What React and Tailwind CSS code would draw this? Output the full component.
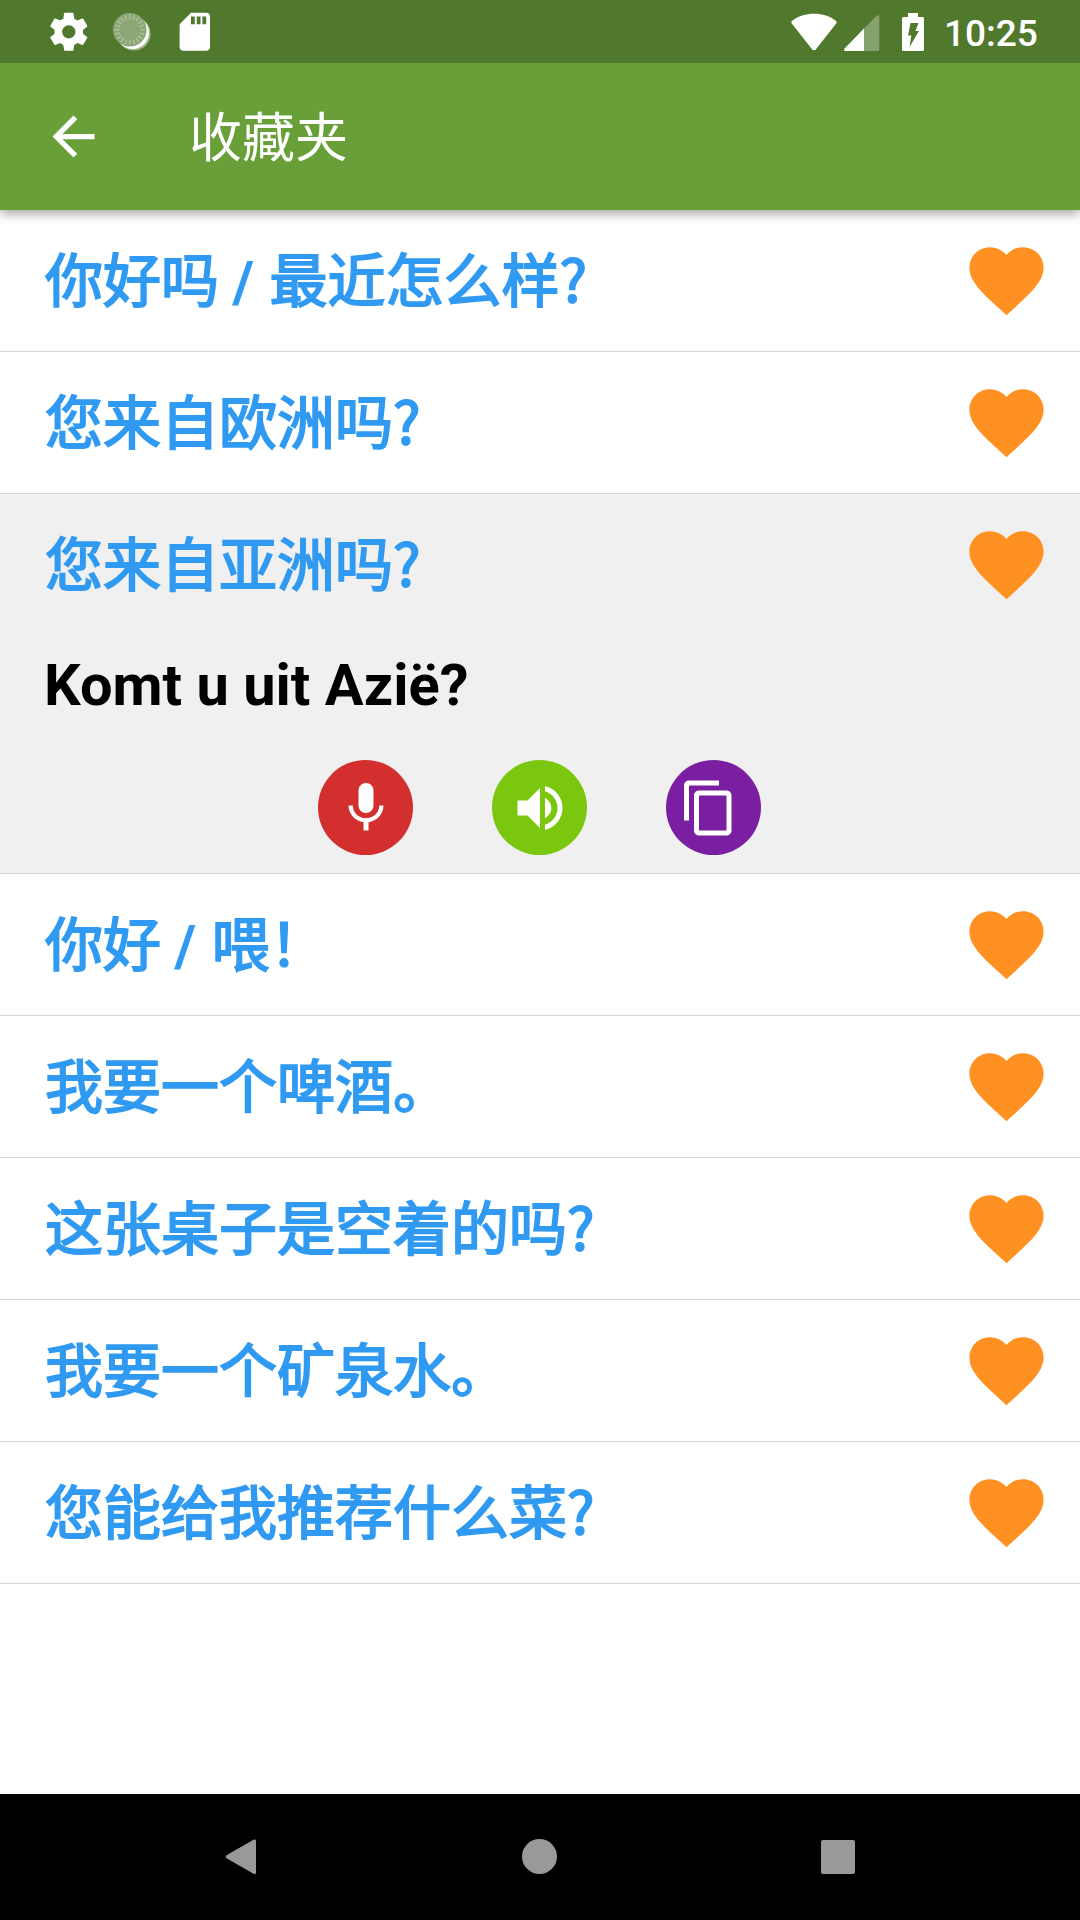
const CJK = "font-['Noto_Sans_CJK_SC',sans-serif]";

function Icon({ size, d, className = "" }) {
  return (
    <svg viewBox="0 0 24 24" style={{ width: size, height: size }} className={`shrink-0 ${className}`} fill="currentColor">
      <path d={d} />
    </svg>
  );
}

const GEAR =
  "M19.43 12.98c.04-.32.07-.64.07-.98s-.03-.66-.07-.98l2.11-1.65c.19-.15.24-.42.12-.64l-2-3.46c-.12-.22-.39-.3-.61-.22l-2.49 1c-.52-.4-1.08-.73-1.69-.98l-.38-2.65C14.46 2.18 14.25 2 14 2h-4c-.25 0-.46.18-.49.42l-.38 2.65c-.61.25-1.17.59-1.69.98l-2.49-1c-.23-.09-.49 0-.61.22l-2 3.46c-.13.22-.07.49.12.64l2.11 1.65c-.04.32-.07.65-.07.98s.03.66.07.98l-2.11 1.65c-.19.15-.24.42-.12.64l2 3.46c.12.22.39.3.61.22l2.49-1c.52.4 1.08.73 1.69.98l.38 2.65c.03.24.24.42.49.42h4c.25 0 .46-.18.49-.42l.38-2.65c.61-.25 1.17-.59 1.69-.98l2.49 1c.23.09.49 0 .61-.22l2-3.46c.12-.22.07-.49-.12-.64l-2.11-1.65zM12 15.5c-1.93 0-3.5-1.57-3.5-3.5s1.57-3.5 3.5-3.5 3.5 1.57 3.5 3.5-1.57 3.5-3.5 3.5z";
const SD =
  "M18 2h-8L4.02 8 4 20c0 1.1.9 2 2 2h12c1.1 0 2-.9 2-2V4c0-1.1-.9-2-2-2zm-6 6h-2V4h2v4zm3 0h-2V4h2v4zm3 0h-2V4h2v4z";
const BACK = "M20 11H7.83l5.59-5.59L12 4l-8 8 8 8 1.41-1.41L7.83 13H20v-2z";
const HEART =
  "M12 21.35l-1.45-1.32C5.4 15.36 2 12.28 2 8.5 2 5.42 4.42 3 7.5 3c1.74 0 3.41.81 4.5 2.09C13.09 3.81 14.76 3 16.5 3 19.58 3 22 5.42 22 8.5c0 3.78-3.4 6.86-8.55 11.54L12 21.35z";
const MIC =
  "M12 14c1.66 0 2.99-1.34 2.99-3L15 5c0-1.66-1.34-3-3-3S9 3.34 9 5v6c0 1.66 1.34 3 3 3zm5.3-3c0 3-2.54 5.1-5.3 5.1S6.7 14 6.7 11H5c0 3.41 2.72 6.23 6 6.72V21h2v-3.28c3.28-.48 6-3.3 6-6.72h-1.7z";
const VOLUME =
  "M3 9v6h4l5 5V4L7 9H3zm13.5 3c0-1.77-1.02-3.29-2.5-4.03v8.05c1.48-.73 2.5-2.25 2.5-4.02zM14 3.23v2.06c2.89.86 5 3.54 5 6.71s-2.11 5.85-5 6.71v2.06c4.01-.91 7-4.49 7-8.77s-2.99-7.86-7-8.77z";
const COPY =
  "M16 1H4c-1.1 0-2 .9-2 2v14h2V3h12V1zm3 4H8c-1.1 0-2 .9-2 2v14c0 1.1.9 2 2 2h11c1.1 0 2-.9 2-2V7c0-1.1-.9-2-2-2zm0 16H8V7h11v14z";

const TICKS = Array.from({ length: 20 }, (_, i) => i * 18);

function Disc() {
  return (
    <svg viewBox="0 0 38 38" className="ml-[22px] h-[38px] w-[38px]">
      <circle cx="20.8" cy="20.8" r="16.8" fill="#fff" fillOpacity="0.45" />
      <circle cx="19.6" cy="19.6" r="16.4" fill="#fff" />
      <circle cx="16.8" cy="16.8" r="16.8" fill="#8ca775" />
      {TICKS.map((a) => (
        <path key={a} d="M16.8 1.5v5" stroke="#b5c6a4" strokeWidth="1.1" transform={`rotate(${a} 16.8 16.8)`} />
      ))}
    </svg>
  );
}

function StatusBar() {
  return (
    <div className="relative z-20 flex h-[63px] items-center bg-[#51792d] text-white">
      <Icon size={45.6} d={GEAR} className="ml-[45.5px]" />
      <Disc />
      <Icon size={45.6} d={SD} className="ml-[20.5px]" />
      <svg viewBox="0 0 46 38" className="ml-auto h-[38px] w-[46px]" fill="#fff">
        <path d="M23 37.300c-.8 0-1.500-.4-2-1L.8 10.500C.1 9.500.2 8.700 1 8 7 3.200 14.600.800 23 .800S39 3.200 45 8c.8.700.9 1.500.2 2.500L25 36.300c-.5.600-1.200 1-2 1z" />
      </svg>
      <svg viewBox="0 0 36 36" className="ml-[7px] mt-[2px] h-[36px] w-[36px]">
        <path d="M20 13.500V36H1.500C.2 36-.4 34.700.6 33.600z" fill="#fff" />
        <path d="M20 13.500 32.700.800C33.700-.2 35.300.3 35.300 1.800V34.500C35.300 35.500 34.800 36 33.800 36H20z" fill="#fff" fillOpacity="0.3" />
      </svg>
      <svg viewBox="0 0 22 38" className="ml-[22px] h-[38px] w-[22px]">
        <path d="M6 0h10v4h4.500Q22 4 22 5.500V36.500Q22 38 20.500 38H1.500Q0 38 0 36.500V5.500Q0 4 1.500 4H6z" fill="#fff" />
        <path d="M8.500 10h8l-3 8H17L7.500 34l1.800-11.500H6z" fill="#51792d" />
      </svg>
      <span className="mt-[5px] mr-[41px] ml-[20px] w-[95px] font-['Roboto',sans-serif] text-[37px] leading-[36px] font-medium">10:25</span>
    </div>
  );
}

function Phrase({ text }) {
  const parts = text.split(/( \/ )/);
  return (
    <div className="flex h-[141px] items-center justify-between pr-[29px] pl-[45px]">
      <span
        className={`${CJK} mb-[7px] text-[58px] leading-[84px] font-normal whitespace-pre text-[#309af2] [-webkit-text-stroke:1.8px_#309af2]`}
      >
        {parts.map((part, i) =>
          part === " / " ? (
            <span key={i} className="-ml-px pr-px font-['Roboto',sans-serif] leading-[0] font-bold [-webkit-text-stroke:0px]">
              {part}
            </span>
          ) : (
            part
          )
        )}
      </span>
      <Icon size={89} d={HEART} className="text-[#ff9122]" />
    </div>
  );
}

function RoundButton({ d, color, className = "" }) {
  return (
    <div className={`flex h-[95px] w-[95px] items-center justify-center rounded-full text-white ${color}`}>
      <Icon size={60} d={d} className={className} />
    </div>
  );
}

function Row({ text, translation }) {
  return (
    <div className={`border-b border-[#d6d6d6] ${translation ? "bg-[#f0f0f0]" : "bg-white"}`}>
      <Phrase text={text} />
      {translation && (
        <div className="h-[238px]">
          <div className="flex h-[125px] items-center pb-[25px] pl-[44px] font-['Roboto',sans-serif] text-[57.75px] leading-[68px] font-bold text-black">
            {translation}
          </div>
          <div className="flex justify-center gap-[79px] pr-[1px]">
            <RoundButton d={MIC} color="bg-[#d32f2f]" />
            <RoundButton d={VOLUME} color="bg-[#7bc70f]" />
            <RoundButton d={COPY} color="bg-[#7b1fa2]" className="mr-[9px]" />
          </div>
        </div>
      )}
    </div>
  );
}

const ROWS = [
  { text: "你好吗 / 最近怎么样?" },
  { text: "您来自欧洲吗?" },
  { text: "您来自亚洲吗?", translation: "Komt u uit Azië?" },
  { text: "你好 / 喂！" },
  { text: "我要一个啤酒。" },
  { text: "这张桌子是空着的吗?" },
  { text: "我要一个矿泉水。" },
  { text: "您能给我推荐什么菜?" },
];

export default function App() {
  return (
    <div className="flex h-[1920px] w-[1080px] flex-col overflow-hidden bg-white" lang="zh-CN">
      <StatusBar />
      <header className="relative z-10 flex h-[147px] items-center bg-[#689f38] text-white shadow-[0_4px_10px_rgba(0,0,0,0.35)]">
        <Icon size={63} d={BACK} className="ml-[42px]" />
        <h1 className={`${CJK} mb-[5px] ml-[84px] text-[53px] leading-[76px] font-normal`}>收藏夹</h1>
      </header>
      <main className="flex-1">
        {ROWS.map((r) => (
          <Row key={r.text} {...r} />
        ))}
      </main>
      <nav className="flex h-[126px] items-center bg-black">
        <svg viewBox="0 0 32 38" className="ml-[225px] h-[38px] w-[32px]" fill="#999">
          <path d="M28.500 1.800c1-.7 2.500-.2 2.500 1.200v31.500c0 1.500-1.500 2-2.500 1.200L1.500 20.300c-1-.9-1-2.300 0-3.100z" />
        </svg>
        <div className="mb-[2px] ml-[265px] h-[35px] w-[35px] rounded-full bg-[#999]" />
        <div className="ml-[264px] h-[34px] w-[34px] rounded-[2px] bg-[#999]" />
      </nav>
    </div>
  );
}
